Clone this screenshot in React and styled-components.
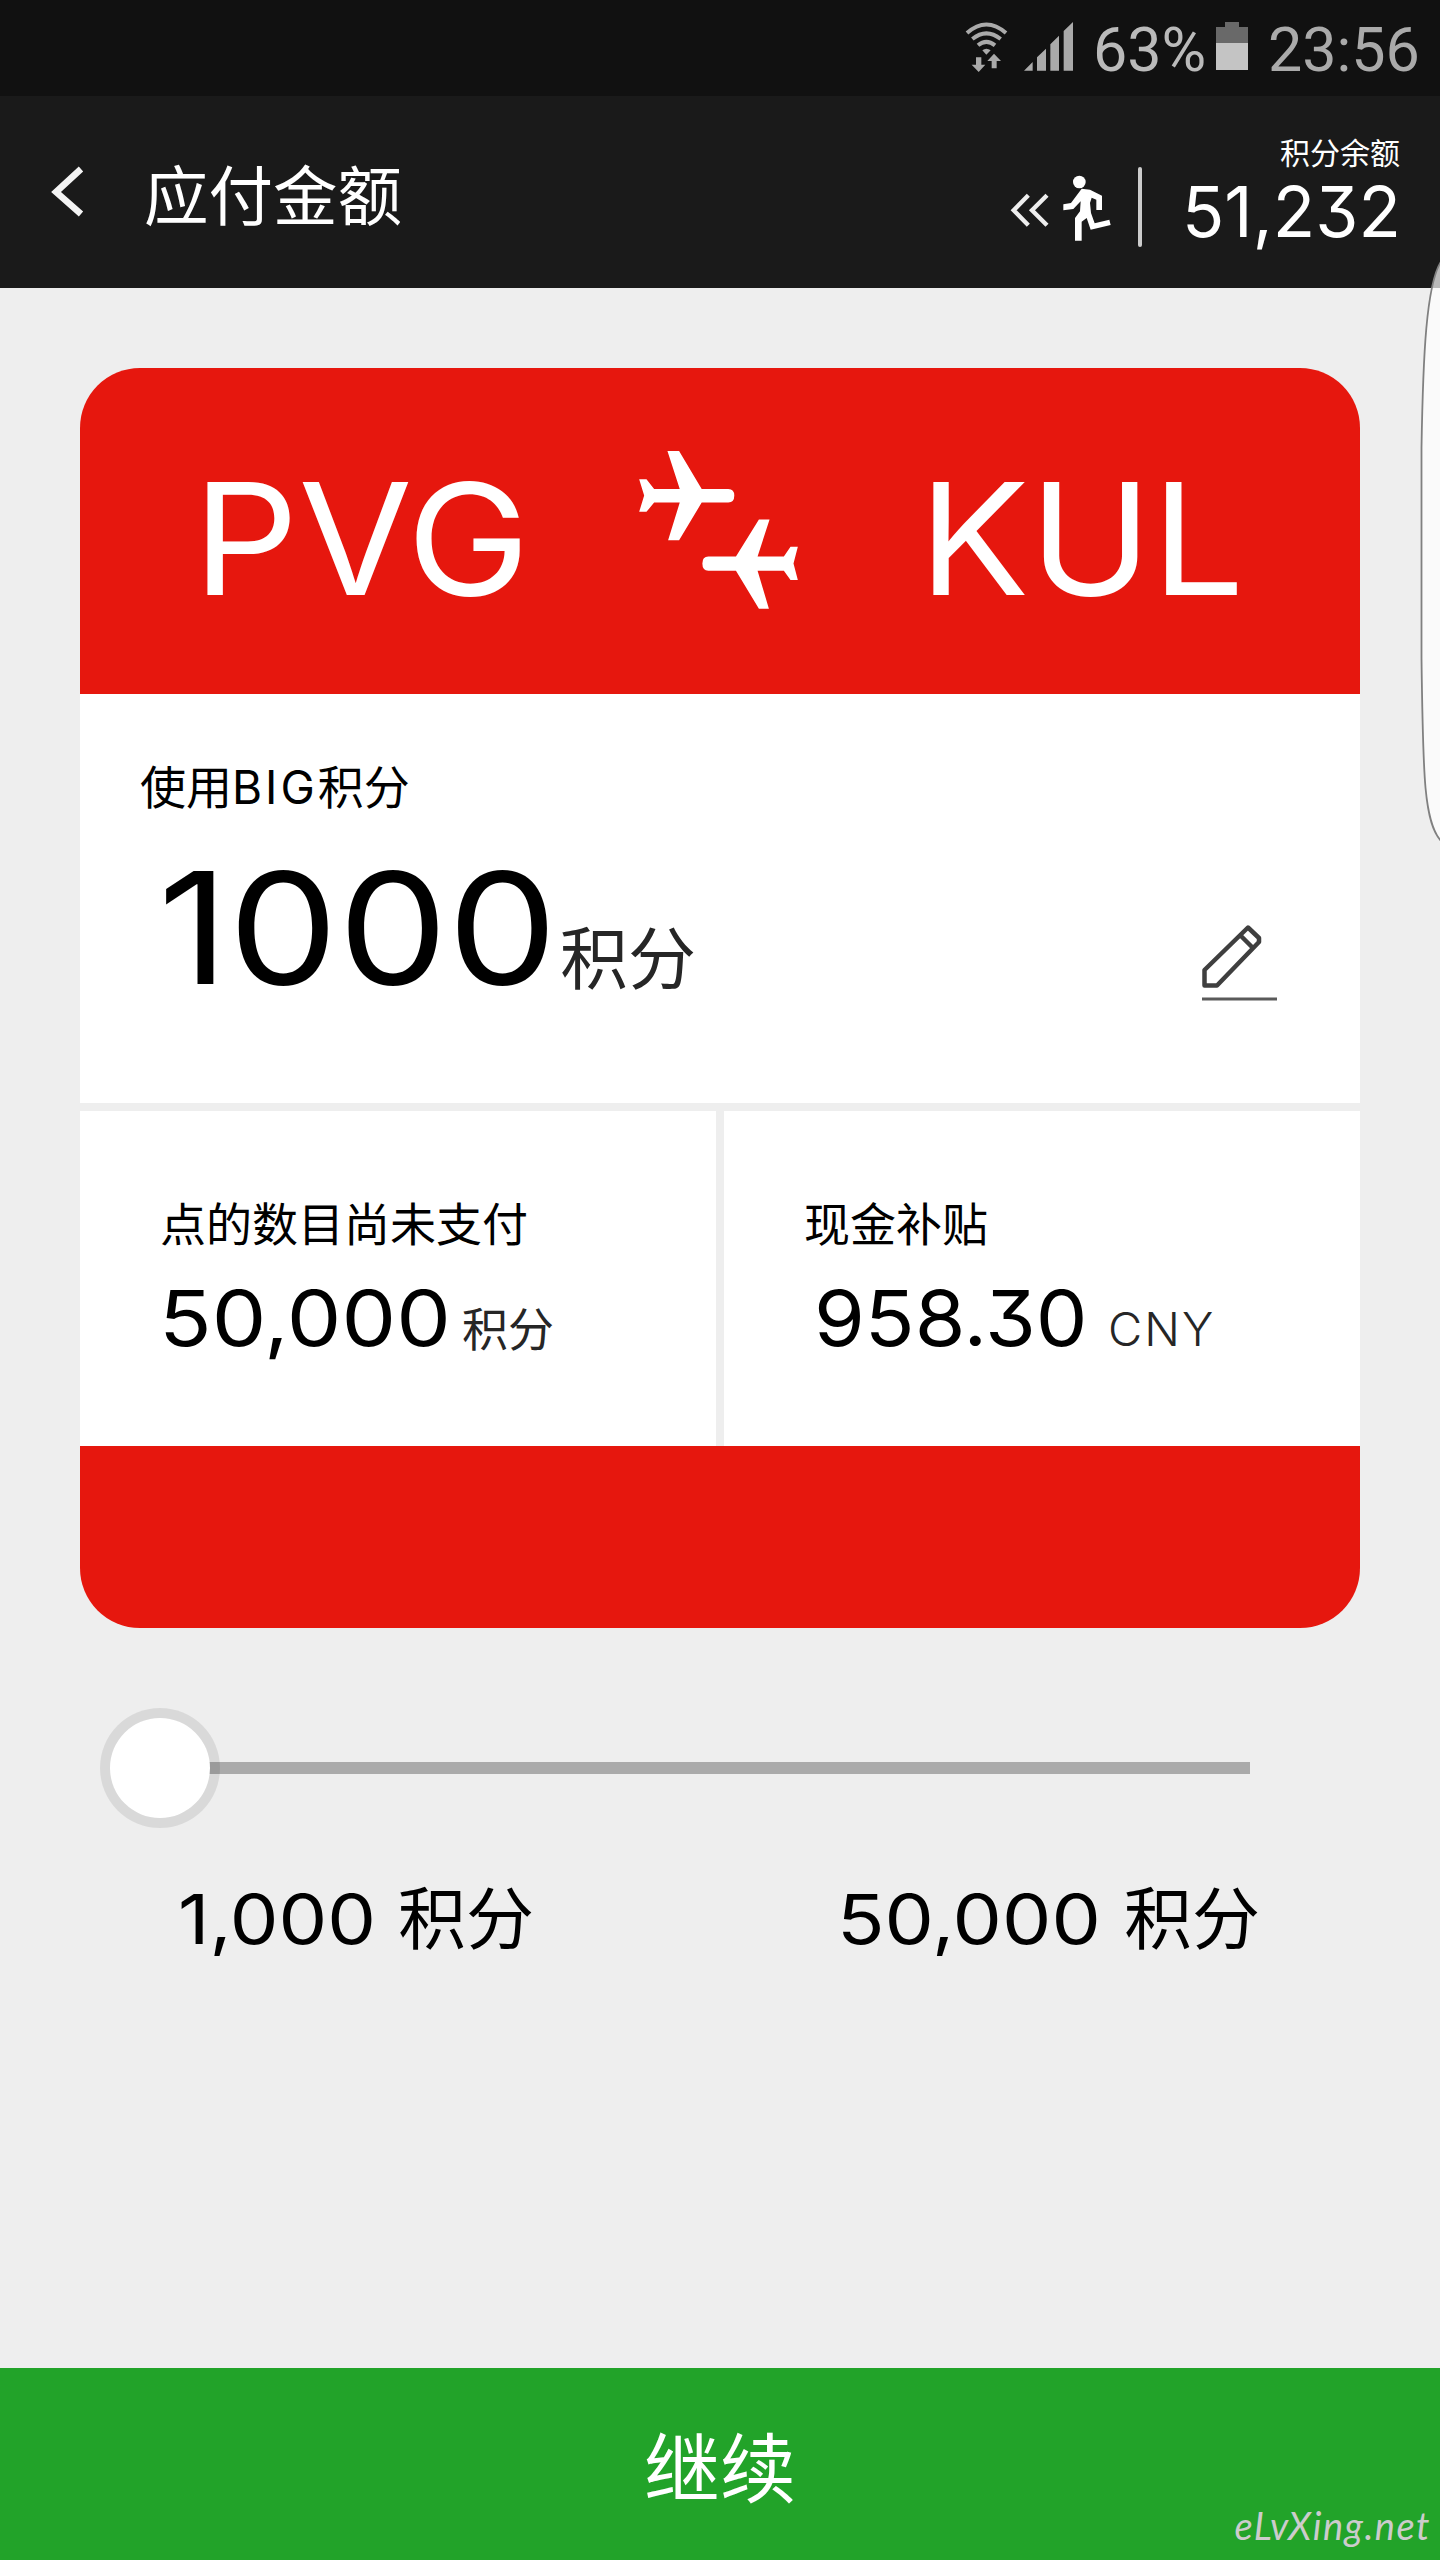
import React from "react";
import styled, { createGlobalStyle } from "styled-components";

const App = () => {
  return (
    <>
      <GlobalStyle />
      <Screen>
        <StatusBar>
          <WifiIcon />
          <SignalIcon />
          <StatusText $color="#bababa" $width={109}>63%</StatusText>
          <BatteryIcon />
          <StatusText $color="#aaaaaa" $width={152}>23:56</StatusText>
        </StatusBar>

        <Header>
          <BackIcon />
          <Title>应付金额</Title>
          <RunnerIcon />
          <Divider />
          <Balance>
            <BalanceLabel>积分余额</BalanceLabel>
            <Figure $size={70} $width={218} $stretch={0.995}>51,232</Figure>
          </Balance>
        </Header>

        <Main>
          <Card>
            <Route>
              <Airport>
                <Figure $size={155} $width={325} $stretch={1.065}>PVG</Figure>
              </Airport>
              <PlanesIcon />
              <Airport>
                <Figure $size={155} $width={325} $stretch={1.06}>KUL</Figure>
              </Airport>
            </Route>
            <PointsPanel>
              <Label>使用<Latin>BIG</Latin>积分</Label>
              <AmountRow $height={140} $top={41} $indent={18}>
                <Figure $size={155} $width={402} $stretch={1.12}>1000</Figure>
                <Unit $size={68}>积分</Unit>
              </AmountRow>
              <PencilIcon />
            </PointsPanel>
            <Split>
              <Cell>
                <Label>点的数目尚未支付</Label>
                <AmountRow $height={80} $top={24} $indent={-1}>
                  <Figure $size={77} $width={303} $stretch={1.125}>50,000</Figure>
                  <Unit $size={46}>积分</Unit>
                </AmountRow>
              </Cell>
              <Cell>
                <Label>现金补贴</Label>
                <AmountRow $height={80} $top={24} $indent={10}>
                  <Figure $size={77} $width={294} $stretch={1.065}>958.30</Figure>
                  <Currency $size={47}>CNY</Currency>
                </AmountRow>
              </Cell>
            </Split>
            <CardFoot />
          </Card>

          <Slider>
            <Thumb />
            <Track />
          </Slider>

          <Range>
            <Limit>
              <Figure $size={69} $width={220} $stretch={1.12}>1,000</Figure>
              <Unit $size={68} $dark>积分</Unit>
            </Limit>
            <Limit>
              <Figure $size={69} $width={287} $stretch={1.135}>50,000</Figure>
              <Unit $size={68} $dark>积分</Unit>
            </Limit>
          </Range>
        </Main>

        <ContinueBtn>
          继续
          <Watermark>eLvXing.net</Watermark>
        </ContinueBtn>

        <EdgePanel />
      </Screen>
    </>
  );
};

export default App;

const WifiIcon = () => (
  <StatusSvg width="43" height="50" viewBox="75 65 129 150" $gap={16}>
    <g fill="none" stroke="#aaa" strokeWidth="12">
      <path d="M81 98Q139 47 198 98" />
      <path d="M97 116Q139 82 182 116" />
      <path d="M114 135Q139 114 165 135" />
    </g>
    <path
      fill="#aaa"
      d="M127 150Q139 141 152 150L139 163ZM108 171H124V193H136L116 215L95 193H108ZM162 160L183 182H170V204H155V182H142Z"
    />
  </StatusSvg>
);

const SignalIcon = () => (
  <StatusSvg width="49" height="49" viewBox="252 67 147 147" $gap={20}>
    <path
      fill="#aaa"
      d="M252 213L278 187V213ZM291 213V173L318 147V213ZM331 213V134L357 108V213ZM371 213V94L399 67V213Z"
    />
  </StatusSvg>
);

const BatteryIcon = () => (
  <StatusSvg width="32" height="48" viewBox="0 0 32 48" $gap={20}>
    <path fill="#696969" d="M9 0H23V5H32V21H0V5H9Z" />
    <path fill="#c4c4c4" d="M0 21H32V48H0Z" />
  </StatusSvg>
);

const BackIcon = () => (
  <BackSvg width="36" height="56" viewBox="0 0 36 56" fill="none">
    <path d="M31 5L6 28L31 50" stroke="#f4f4f4" strokeWidth="6.5" />
  </BackSvg>
);

const RunnerIcon = () => (
  <RunnerSvg width="101" height="68" viewBox="210 523 303 204">
    <path
      fill="none"
      stroke="#eee"
      strokeWidth="13"
      d="M265 587L221 632L265 677M321 587L276 632L321 677"
    />
    <circle cx="418" cy="547" r="19" fill="#fff" />
    <path
      fill="#fff"
      d="M425 567L450 570L486 588V631H469V600L455 594L450 610L453 640L464 671L508 660L512 676L452 690L440 655L425 666V723H405V655L420 635L422 605L400 628L370 632V614L393 610Z"
    />
  </RunnerSvg>
);

const PlanesIcon = () => (
  <svg width="159" height="158" viewBox="60 63 477 475">
    <path
      fill="#fff"
      d="M145 63H180L248 177H328Q346 177 346 197Q346 218 328 218H248L180 331H147L182 218H105L82 246H60L75 197L60 148H82L105 177H182Z"
    />
    <path
      fill="#fff"
      d="M452 269L416 380H495L515 351H537L524 401L537 451H515L495 423H416L450 537H420L351 423H268Q250 422 250 401Q250 380 268 380H351L420 269Z"
    />
  </svg>
);

const PencilIcon = () => (
  <PencilSvg width="76" height="76" viewBox="0 0 76 76" fill="none">
    <path
      stroke="#3f3f3f"
      strokeWidth="4.500"
      strokeLinejoin="round"
      d="M2.500 45V60.500H15L57 17V13L46 2.500ZM38 10L50 22"
    />
    <path stroke="#5a5a5a" strokeWidth="3" d="M0 74H75" />
  </PencilSvg>
);

const EdgePanel = () => (
  <EdgeSvg width="20" height="590" viewBox="0 0 20 590">
    <path
      fill="#fff"
      fillOpacity="0.7"
      stroke="#808080"
      strokeWidth="1.800"
      d="M22 2C6 24 3 100 1.500 190V400C3 520 4 566 22 584"
    />
  </EdgeSvg>
);

const GlobalStyle = createGlobalStyle`
  body {
    margin: 0;
    background-color: #eee;
    font-family: Inter, "Noto Sans CJK SC", sans-serif;
    color: #000;
  }
`;

const Screen = styled.div`
  position: relative;
  display: flex;
  flex-direction: column;
  width: 1440px;
  height: 2560px;
  overflow: hidden;
`;

const StatusBar = styled.div`
  display: flex;
  align-items: flex-start;
  height: 96px;
  padding-left: 965px;
  box-sizing: border-box;
  background-color: #111;
`;

const StatusSvg = styled.svg`
  flex: none;
  margin: 22px ${(props) => props.$gap}px 0 0;
`;

const StatusText = styled.div`
  flex: none;
  width: ${(props) => props.$width}px;
  margin-right: 14px;
  font: 400 61px/100px Roboto, sans-serif;
  white-space: nowrap;
  color: ${(props) => props.$color};
`;

const Header = styled.div`
  display: flex;
  height: 192px;
  background-color: #1a1a1a;
  color: #fff;
`;

const BackSvg = styled.svg`
  margin: 68px 0 0 50px;
`;

const Title = styled.div`
  flex: 1;
  margin-left: 58px;
  font-size: 64.500px;
  line-height: 203px;
`;

const RunnerSvg = styled.svg`
  margin-top: 78px;
`;

const Divider = styled.div`
  width: 4px;
  height: 80px;
  margin: 71px 0 0 27px;
  border-radius: 2px;
  background-color: #ccc;
`;

const Balance = styled.div`
  display: flex;
  flex-direction: column;
  align-items: flex-end;
  width: 258px;
  margin-right: 40px;
  padding-top: 37px;
  line-height: 78px;
`;

const BalanceLabel = styled.div`
  font-size: 30px;
  line-height: 40px;
`;

const Figure = styled.span`
  display: block;
  flex: none;
  width: ${(props) => props.$width}px;
  font-size: ${(props) => props.$size}px;
  font-weight: 400;
  font-feature-settings: "cv09";
  white-space: nowrap;
  transform: scaleX(${(props) => props.$stretch});
  transform-origin: left;
`;

const Main = styled.div`
  flex: 1;
  padding: 80px 80px 0;
`;

const Card = styled.div`
  border-radius: 60px;
  overflow: hidden;
`;

const Route = styled.div`
  display: flex;
  align-items: center;
  justify-content: space-between;
  height: 324px;
  padding: 0 116px 2px 113px;
  background-color: #e6170e;
`;

const Airport = styled.div`
  width: 325px;
  padding-top: 18px;
  line-height: 308px;
  color: #fff;
`;

const PointsPanel = styled.div`
  position: relative;
  height: 409px;
  padding: 63px 60px 0;
  box-sizing: border-box;
  background-color: #fff;
`;

const Label = styled.div`
  font-size: 46px;
  line-height: 60px;
`;

const Latin = styled.span`
  letter-spacing: 3px;
`;

const AmountRow = styled.div`
  display: flex;
  align-items: baseline;
  margin-top: ${(props) => props.$top}px;
  margin-left: ${(props) => props.$indent || 0}px;
  line-height: ${(props) => props.$height}px;
`;

const Unit = styled.span`
  font-size: ${(props) => props.$size}px;
  color: ${(props) => (props.$dark ? "#000" : "#262626")};
`;

const Currency = styled(Unit)`
  font-weight: 300;
  letter-spacing: 2px;
`;

const PencilSvg = styled.svg`
  position: absolute;
  right: 82px;
  bottom: 102px;
`;

const Split = styled.div`
  display: grid;
  grid-template-columns: 1fr 1fr;
  gap: 8px;
  margin-top: 8px;
`;

const Cell = styled.div`
  height: 335px;
  padding: 83px 0 0 80px;
  box-sizing: border-box;
  background-color: #fff;
`;

const CardFoot = styled.div`
  height: 182px;
  background-color: #e6170e;
`;

const Slider = styled.div`
  display: flex;
  align-items: center;
  margin: 80px 110px 0 20px;
`;

const Thumb = styled.div`
  z-index: 1;
  width: 100px;
  height: 100px;
  border: 10px solid rgba(0, 0, 0, 0.085);
  border-radius: 50%;
  background-color: #fff;
  background-clip: padding-box;
`;

const Track = styled.div`
  flex: 1;
  height: 12px;
  margin-left: -12px;
  background-color: #aaa;
`;

const Range = styled.div`
  display: flex;
  justify-content: space-between;
  margin-top: 41px;
  padding: 0 100px 0 98px;
`;

const Limit = styled.div`
  display: flex;
  align-items: baseline;
  line-height: 100px;
`;

const ContinueBtn = styled.div`
  position: relative;
  height: 192px;
  font-size: 76px;
  line-height: 202px;
  text-align: center;
  color: #fff;
  background-color: #22a329;
`;

const Watermark = styled.span`
  position: absolute;
  right: 9px;
  bottom: 11px;
  font: italic 400 38px/48px Lato, sans-serif;
  letter-spacing: 1.500px;
  color: #ccc;
`;

const EdgeSvg = styled.svg`
  position: absolute;
  top: 258px;
  right: 0;
`;
